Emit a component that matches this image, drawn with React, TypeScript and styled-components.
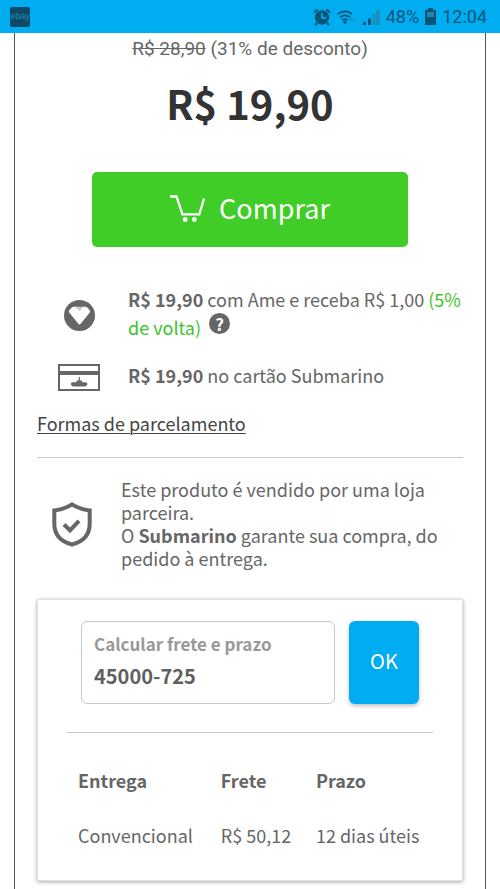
import React from "react";
import styled, { createGlobalStyle } from "styled-components";

const GlobalStyle = createGlobalStyle`
  *, *::before, *::after { box-sizing: border-box; }
  body {
    margin: 0;
    background: #fff;
    color: #666;
    font-family: "Noto Sans CJK SC", "Noto Sans", sans-serif;
    font-size: 18px;
    line-height: 27px;
  }
  button, input { font-family: inherit; }
`;

const Screen = styled.div`
  min-height: 100vh;
  display: flex;
  flex-direction: column;
`;

const StatusBar = styled.header`
  height: 33px;
  padding: 0 13px 0 10px;
  display: flex;
  align-items: center;
  justify-content: space-between;
  background: #00adf0;
  color: #075578;
  font: 18px/33px Roboto, sans-serif;
`;

const AppBadge = styled.span`
  width: 20px;
  height: 20px;
  border-radius: 2px;
  background: #0b4964;
  color: #2389b5;
  font: 9px/18px "Liberation Sans", sans-serif;
  text-align: center;
`;

const StatusGroup = styled.div`
  display: flex;
  align-items: center;
  gap: 6px;
`;

const Frame = styled.main`
  flex: 1;
  margin: 0 14px;
  padding: 0 22px 8px;
  border: solid #555;
  border-width: 0 1px;
`;

const OldPrice = styled.p`
  margin: 0;
  padding-top: 2px;
  font: 19px/27px Roboto, sans-serif;
  text-align: center;
`;

const Price = styled.h1`
  margin: 10px 0 38px;
  color: #333;
  font-size: 40px;
  font-weight: 700;
  line-height: 62px;
  text-align: center;
`;

const BuyButton = styled.button`
  display: flex;
  align-items: center;
  justify-content: center;
  gap: 14px;
  width: 74%;
  height: 75px;
  margin: 0 auto 39px;
  padding: 0 0 4px;
  border: 0;
  border-radius: 5px;
  background: #40cd28;
  color: #fff;
  font-size: 27px;
  line-height: 40px;
`;

const Offer = styled.div`
  display: grid;
  grid-template-columns: 42px 1fr;
  align-items: center;
  gap: 28px;
  margin: 0 0 18px 21px;
`;

const OfferIcon = styled.div`
  display: flex;
  justify-content: center;
`;

const OfferText = styled.p`
  margin: 0;
  padding-bottom: 3px;
`;

const Cashback = styled.span`
  color: #3cc52a;
`;

const HelpButton = styled.button`
  width: 21px;
  height: 21px;
  margin-left: 4px;
  padding: 0;
  border: 0;
  border-radius: 50%;
  background: #666;
  color: #fff;
  font-size: 17px;
  font-weight: 700;
  line-height: 21px;
  vertical-align: 4px;
`;

const InstallmentsLink = styled.a`
  display: block;
  width: fit-content;
  margin-bottom: 20px;
  color: #444;
  text-decoration-thickness: 1px;
  text-underline-offset: 2px;
`;

const Divider = styled.hr`
  height: 1px;
  margin: 0;
  border: 0;
  background: #c8c8c8;
`;

const Guarantee = styled.section`
  display: grid;
  grid-template-columns: 40px 1fr;
  align-items: center;
  gap: 29px;
  padding: 20px 0 29px 15px;
`;

const GuaranteeText = styled.p`
  margin: 0;
  line-height: 23px;
`;

const ShippingCard = styled.section`
  padding: 21px 29px 17px;
  border: 1px solid #e2e2e2;
  box-shadow: 0 1px 4px rgba(0, 0, 0, 0.35);
`;

const ShippingForm = styled.form`
  display: grid;
  grid-template-columns: 1fr 70px;
  gap: 14px;
  margin: 0 14px 28px;
`;

const Field = styled.label`
  display: flex;
  flex-direction: column;
  height: 83px;
  padding: 8px 12px;
  border: 1px solid #c8c8c8;
  border-radius: 6px;
  color: #999;
  font-size: 17px;
  font-weight: 700;
  line-height: 27px;
`;

const ZipInput = styled.input`
  width: 100%;
  height: 36px;
  padding: 0;
  border: 0;
  outline: 0;
  background: transparent;
  color: #606060;
  font-size: 20px;
  font-weight: 700;
`;

const SubmitButton = styled.button`
  padding: 0 0 5px;
  border: 0;
  border-radius: 6px;
  background: #00adf0;
  color: #fff;
  font-size: 20px;
  box-shadow: 0 2px 4px rgba(0, 0, 0, 0.25);
`;

const RateTable = styled.table`
  width: 100%;
  margin-top: 20px;
  border-collapse: collapse;
  table-layout: fixed;
  text-align: left;

  th, td {
    height: 55px;
    padding: 0 0 0 11px;
    white-space: nowrap;
  }
`;

const RateColumn = styled.col<{ $share: number }>`
  width: ${({ $share }) => $share}%;
`;

const AlarmIcon = () => (
  <svg width="18" height="18" viewBox="0 0 18 18" fill="none" aria-label="Alarme">
    <circle cx="9" cy="9.5" r="7.2" fill="#075578" />
    <path d="M1 4.5 4.6 1.5M17 4.5 13.4 1.5M4 15l-2 2M14 15l2 2" stroke="#075578" strokeWidth="2.2" />
    <path d="M9 5.2v4.6h4" stroke="#00adf0" strokeWidth="1.7" />
  </svg>
);

const WifiIcon = () => (
  <svg width="20" height="16" viewBox="0 0 20 16" fill="none" stroke="#075578" strokeWidth="1.8" aria-label="Wi-Fi">
    <path d="M.8 5.200a10.500 10.500 0 0 1 14.400 0M3.200 8.300a7 7 0 0 1 9.600 0M5.500 11.200a3.800 3.800 0 0 1 5 0" />
    <circle cx="8" cy="13.2" r=".7" fill="#075578" />
    <path d="m12.500 11 1.500-2 1.500 2zM16 11l1.500 2 1.500-2z" stroke="#178bb8" strokeWidth="1" />
  </svg>
);

const SignalIcon = () => (
  <svg width="17" height="16" viewBox="0 0 17 16" aria-label="Sinal">
    <path d="M0 13h3v3H0zM5 9.5h3V16H5z" fill="#075578" />
    <path d="M9.5 5h3v11h-3zM13 1h4v15h-4z" fill="#188fbd" />
  </svg>
);

const BatteryIcon = () => (
  <svg width="11" height="17" viewBox="0 0 11 17" aria-label="Bateria">
    <path d="M3 0h5v2h3v15H0V2h3z" fill="#075578" />
    <path d="M2 4h7v5H2z" fill="#2385aa" />
  </svg>
);

const CartIcon = () => (
  <svg width="35" height="30" viewBox="0 -2 35 30" fill="none" aria-hidden="true">
    <path d="M0 1.500h6.500l6 17.800h16.800L34 3.500" stroke="#fff" strokeWidth="2.3" />
    <circle cx="15.2" cy="24.5" r="2.4" fill="#fff" />
    <circle cx="24.3" cy="24.5" r="2.4" fill="#fff" />
  </svg>
);

const AmeIcon = () => (
  <svg width="31" height="31" viewBox="0 0 31 31" aria-hidden="true">
    <circle cx="15.5" cy="15.5" r="15.5" fill="#666" />
    <path d="M5 12.200q-.6-1 .3-2L8 7.300q.6-.6 1.500-.6H13l2.500 2 2.500-2h3.500q.9 0 1.500.6l2.700 2.900q.9 1 .3 2L16.700 23.800q-1.200 1.200-2.400 0z" fill="#fff" />
    <path d="M11.500 6.700h8l-4 4.600z" fill="#ccc" />
  </svg>
);

const StoreCardIcon = () => (
  <svg width="42" height="27" viewBox="0 0 42 27" aria-hidden="true">
    <path d="M1 1h40v25H1z" fill="#fff" stroke="#666" strokeWidth="2" />
    <path d="M1 7h40v4H1z" fill="#666" />
    <path d="M13 19.500q0-1.300 1.500-1.300h4v-1.700h2.200V13h1.200v3.500h2.200v1.700h3q2.400 0 2.400 1.800t-2.400 2.500h-12L13 21z" fill="#666" />
  </svg>
);

const ShieldIcon = () => (
  <svg width="40" height="45" viewBox="0 0 40 45" fill="none" stroke="#666" aria-hidden="true">
    <path d="M20 2.400q8 5 17.700 6v13.400Q37.700 38 20 42.500 2.300 38 2.300 21.800V8.400Q12 7.400 20 2.400Z" strokeWidth="4" />
    <path d="m12 22.500 6 5.800 9-9.400" strokeWidth="4" />
  </svg>
);

export default function App() {
  return (
    <>
      <GlobalStyle />
      <Screen>
        <StatusBar>
          <AppBadge>ebay</AppBadge>
          <StatusGroup>
            <AlarmIcon />
            <WifiIcon />
            <SignalIcon />
            <span>48%</span>
            <BatteryIcon />
            <span>12:04</span>
          </StatusGroup>
        </StatusBar>
        <Frame>
          <OldPrice><s>R$ 28,90</s> (31% de desconto)</OldPrice>
          <Price>R$ 19,90</Price>
          <BuyButton type="button"><CartIcon />Comprar</BuyButton>
          <Offer>
            <OfferIcon><AmeIcon /></OfferIcon>
            <OfferText>
              <b>R$ 19,90</b> com Ame e receba R$ 1,00 <Cashback>(5% de volta)</Cashback>{" "}
              <HelpButton type="button" aria-label="Ajuda">?</HelpButton>
            </OfferText>
          </Offer>
          <Offer>
            <OfferIcon><StoreCardIcon /></OfferIcon>
            <OfferText><b>R$ 19,90</b> no cartão Submarino</OfferText>
          </Offer>
          <InstallmentsLink href="#parcelamento">Formas de parcelamento</InstallmentsLink>
          <Divider />
          <Guarantee>
            <ShieldIcon />
            <GuaranteeText>
              Este produto é vendido por uma loja parceira.<br />
              O <b>Submarino</b> garante sua compra, do pedido à entrega.
            </GuaranteeText>
          </Guarantee>
          <ShippingCard>
            <ShippingForm onSubmit={(event) => event.preventDefault()}>
              <Field>
                Calcular frete e prazo
                <ZipInput defaultValue="45000-725" inputMode="numeric" />
              </Field>
              <SubmitButton type="submit">OK</SubmitButton>
            </ShippingForm>
            <Divider />
            <RateTable>
              <colgroup>
                <RateColumn $share={39} />
                <RateColumn $share={26} />
                <RateColumn $share={35} />
              </colgroup>
              <thead>
                <tr><th>Entrega</th><th>Frete</th><th>Prazo</th></tr>
              </thead>
              <tbody>
                <tr><td>Convencional</td><td>R$ 50,12</td><td>12 dias úteis</td></tr>
              </tbody>
            </RateTable>
          </ShippingCard>
        </Frame>
      </Screen>
    </>
  );
}
